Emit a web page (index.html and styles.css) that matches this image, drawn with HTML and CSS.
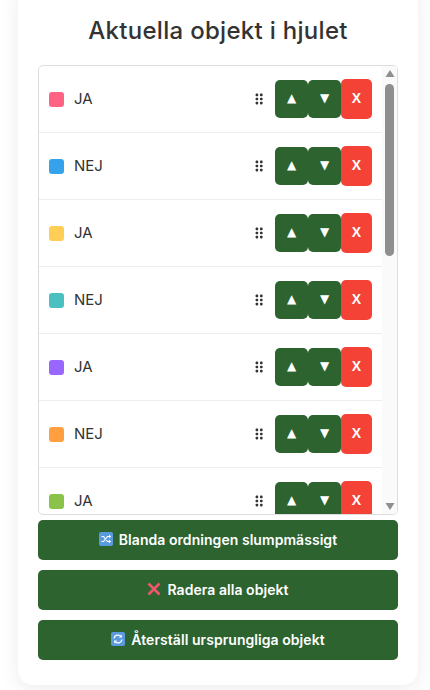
FILE: index.html
```html
<!DOCTYPE html>
<html lang="sv">
<head>
    <meta charset="UTF-8">
    <meta name="viewport" content="width=device-width, initial-scale=1.0">
    <title>Aktuella objekt i hjulet</title>
    <link rel="stylesheet" href="styles.css">
</head>
<body>

    <svg class="defs" width="0" height="0">
        <symbol id="dots" viewBox="0 0 8 12">
            <rect x="0.6" y="0.6" width="2.6" height="2.6" rx="0.8"/>
            <rect x="5" y="0.6" width="2.6" height="2.6" rx="0.8"/>
            <rect x="0.6" y="4.7" width="2.6" height="2.6" rx="0.8"/>
            <rect x="5" y="4.7" width="2.6" height="2.6" rx="0.8"/>
            <rect x="0.6" y="8.8" width="2.6" height="2.6" rx="0.8"/>
            <rect x="5" y="8.8" width="2.6" height="2.6" rx="0.8"/>
        </symbol>
    </svg>

    <div class="card">
        <h2>Aktuella objekt i hjulet</h2>

        <div class="item-box">
            <ul class="item-list">
                <li><span class="swatch pink"></span><span class="name">JA</span><svg class="handle"><use href="#dots"/></svg><button class="move">▲</button><button class="move">▼</button><button class="remove">X</button></li>
                <li><span class="swatch blue"></span><span class="name">NEJ</span><svg class="handle"><use href="#dots"/></svg><button class="move">▲</button><button class="move">▼</button><button class="remove">X</button></li>
                <li><span class="swatch yellow"></span><span class="name">JA</span><svg class="handle"><use href="#dots"/></svg><button class="move">▲</button><button class="move">▼</button><button class="remove">X</button></li>
                <li><span class="swatch teal"></span><span class="name">NEJ</span><svg class="handle"><use href="#dots"/></svg><button class="move">▲</button><button class="move">▼</button><button class="remove">X</button></li>
                <li><span class="swatch purple"></span><span class="name">JA</span><svg class="handle"><use href="#dots"/></svg><button class="move">▲</button><button class="move">▼</button><button class="remove">X</button></li>
                <li><span class="swatch orange"></span><span class="name">NEJ</span><svg class="handle"><use href="#dots"/></svg><button class="move">▲</button><button class="move">▼</button><button class="remove">X</button></li>
                <li><span class="swatch green"></span><span class="name">JA</span><svg class="handle"><use href="#dots"/></svg><button class="move">▲</button><button class="move">▼</button><button class="remove">X</button></li>
            </ul>
            <div class="scrollbar">
                <svg class="arrow" viewBox="0 0 9 7"><path d="M4.5 0L9 7H0z"/></svg>
                <div class="thumb"></div>
                <svg class="arrow" viewBox="0 0 9 7"><path d="M0 0H9L4.5 7z"/></svg>
            </div>
        </div>

        <button class="action">
            <svg class="emoji" viewBox="0 0 14 14">
                <rect width="14" height="14" rx="2" fill="#5a9be0"/>
                <path d="M2.5 4.5h2l4 5h2M2.5 9.5h2l4-5h2" fill="none" stroke="#fff" stroke-width="1.2"/>
                <path d="M10 2.8l2.2 1.7-2.2 1.7zM10 7.8l2.2 1.7-2.2 1.7z" fill="#fff"/>
            </svg>
            Blanda ordningen slumpmässigt
        </button>
        <button class="action">
            <svg class="emoji" viewBox="0 0 14 14">
                <path d="M1.5 1.5l11 11M12.5 1.5l-11 11" fill="none" stroke="#f0566e" stroke-width="2.6"/>
            </svg>
            Radera alla objekt
        </button>
        <button class="action">
            <svg class="emoji" viewBox="0 0 14 14">
                <rect width="14" height="14" rx="2" fill="#5a9be0"/>
                <path d="M3 6.5a4 4 0 0 1 7-2M11 7.5a4 4 0 0 1-7 2" fill="none" stroke="#fff" stroke-width="1.3"/>
                <path d="M10.8 2.4v3h-3zM3.2 11.6v-3h3z" fill="#fff"/>
            </svg>
            Återställ ursprungliga objekt
        </button>
    </div>

</body>
</html>
```

FILE: styles.css
```css
* {
    box-sizing: border-box;
    margin: 0;
    padding: 0;
}

html, body {
    height: 690px;
    overflow: hidden;
}

body {
    font-family: Inter, "Open Sans", sans-serif;
    background-color: #fff;
    color: #333;
}

.defs {
    position: absolute;
}

.card {
    width: 400px;
    height: 705px;
    margin: -20px 0 0 18px;
    padding: 30px 20px 0;
    background-color: #fff;
    border-radius: 15px;
    box-shadow: 0 4px 20px rgba(0, 0, 0, 0.08);
}

h2 {
    height: 55px;
    font-size: 24px;
    font-weight: 500;
    line-height: 42px;
    letter-spacing: 0.3px;
    text-align: center;
    color: #333;
}

.item-box {
    display: flex;
    height: 450px;
    margin-bottom: 5px;
    overflow: hidden;
    border: 1px solid #ddd;
    border-radius: 5px;
}

.item-list {
    flex: 1;
    list-style: none;
}

.item-list li {
    display: flex;
    align-items: center;
    height: 67px;
    padding: 0 10px;
    border-bottom: 1px solid #eee;
}

.scrollbar {
    display: flex;
    flex-direction: column;
    align-items: center;
    width: 15px;
    padding: 4px 0 4px;
    background-color: #fafafa;
}

.arrow {
    flex: none;
    width: 10px;
    height: 7px;
    fill: #8f8f8f;
}

.thumb {
    width: 9px;
    height: 172px;
    margin: 7px 0 auto;
    background-color: #8f8f8f;
    border-radius: 5px;
}

.swatch {
    width: 15px;
    height: 15px;
    margin-right: 10px;
    border-radius: 3px;
}

.pink { background-color: #ff6384; }
.blue { background-color: #36a2eb; }
.yellow { background-color: #ffce56; }
.teal { background-color: #4bc0c0; }
.purple { background-color: #9966ff; }
.orange { background-color: #ff9f40; }
.green { background-color: #8bc34a; }

.name {
    flex: 1;
    padding-bottom: 2px;
    font-size: 15px;
}

.handle {
    width: 8px;
    height: 12px;
    margin-right: 12px;
    fill: #333;
}

.move, .remove {
    flex: none;
    height: 38px;
    padding-bottom: 2px;
    font-family: "DejaVu Sans", sans-serif;
    font-size: 12px;
    color: #fff;
    border: none;
    border-radius: 5px;
}

.move {
    width: 33px;
    background-color: #2c632f;
}

.remove {
    width: 31px;
    height: 40px;
    font-family: "Liberation Sans", sans-serif;
    font-size: 14px;
    font-weight: bold;
    background-color: #f44336;
}

.action {
    display: flex;
    justify-content: center;
    align-items: center;
    gap: 6px;
    width: 100%;
    height: 40px;
    margin-bottom: 10px;
    padding-bottom: 2px;
    font-family: inherit;
    font-size: 14px;
    font-weight: 600;
    letter-spacing: 0.05px;
    color: #fff;
    background-color: #2c632f;
    border: none;
    border-radius: 5px;
}

.emoji {
    width: 14px;
    height: 14px;
}
```
